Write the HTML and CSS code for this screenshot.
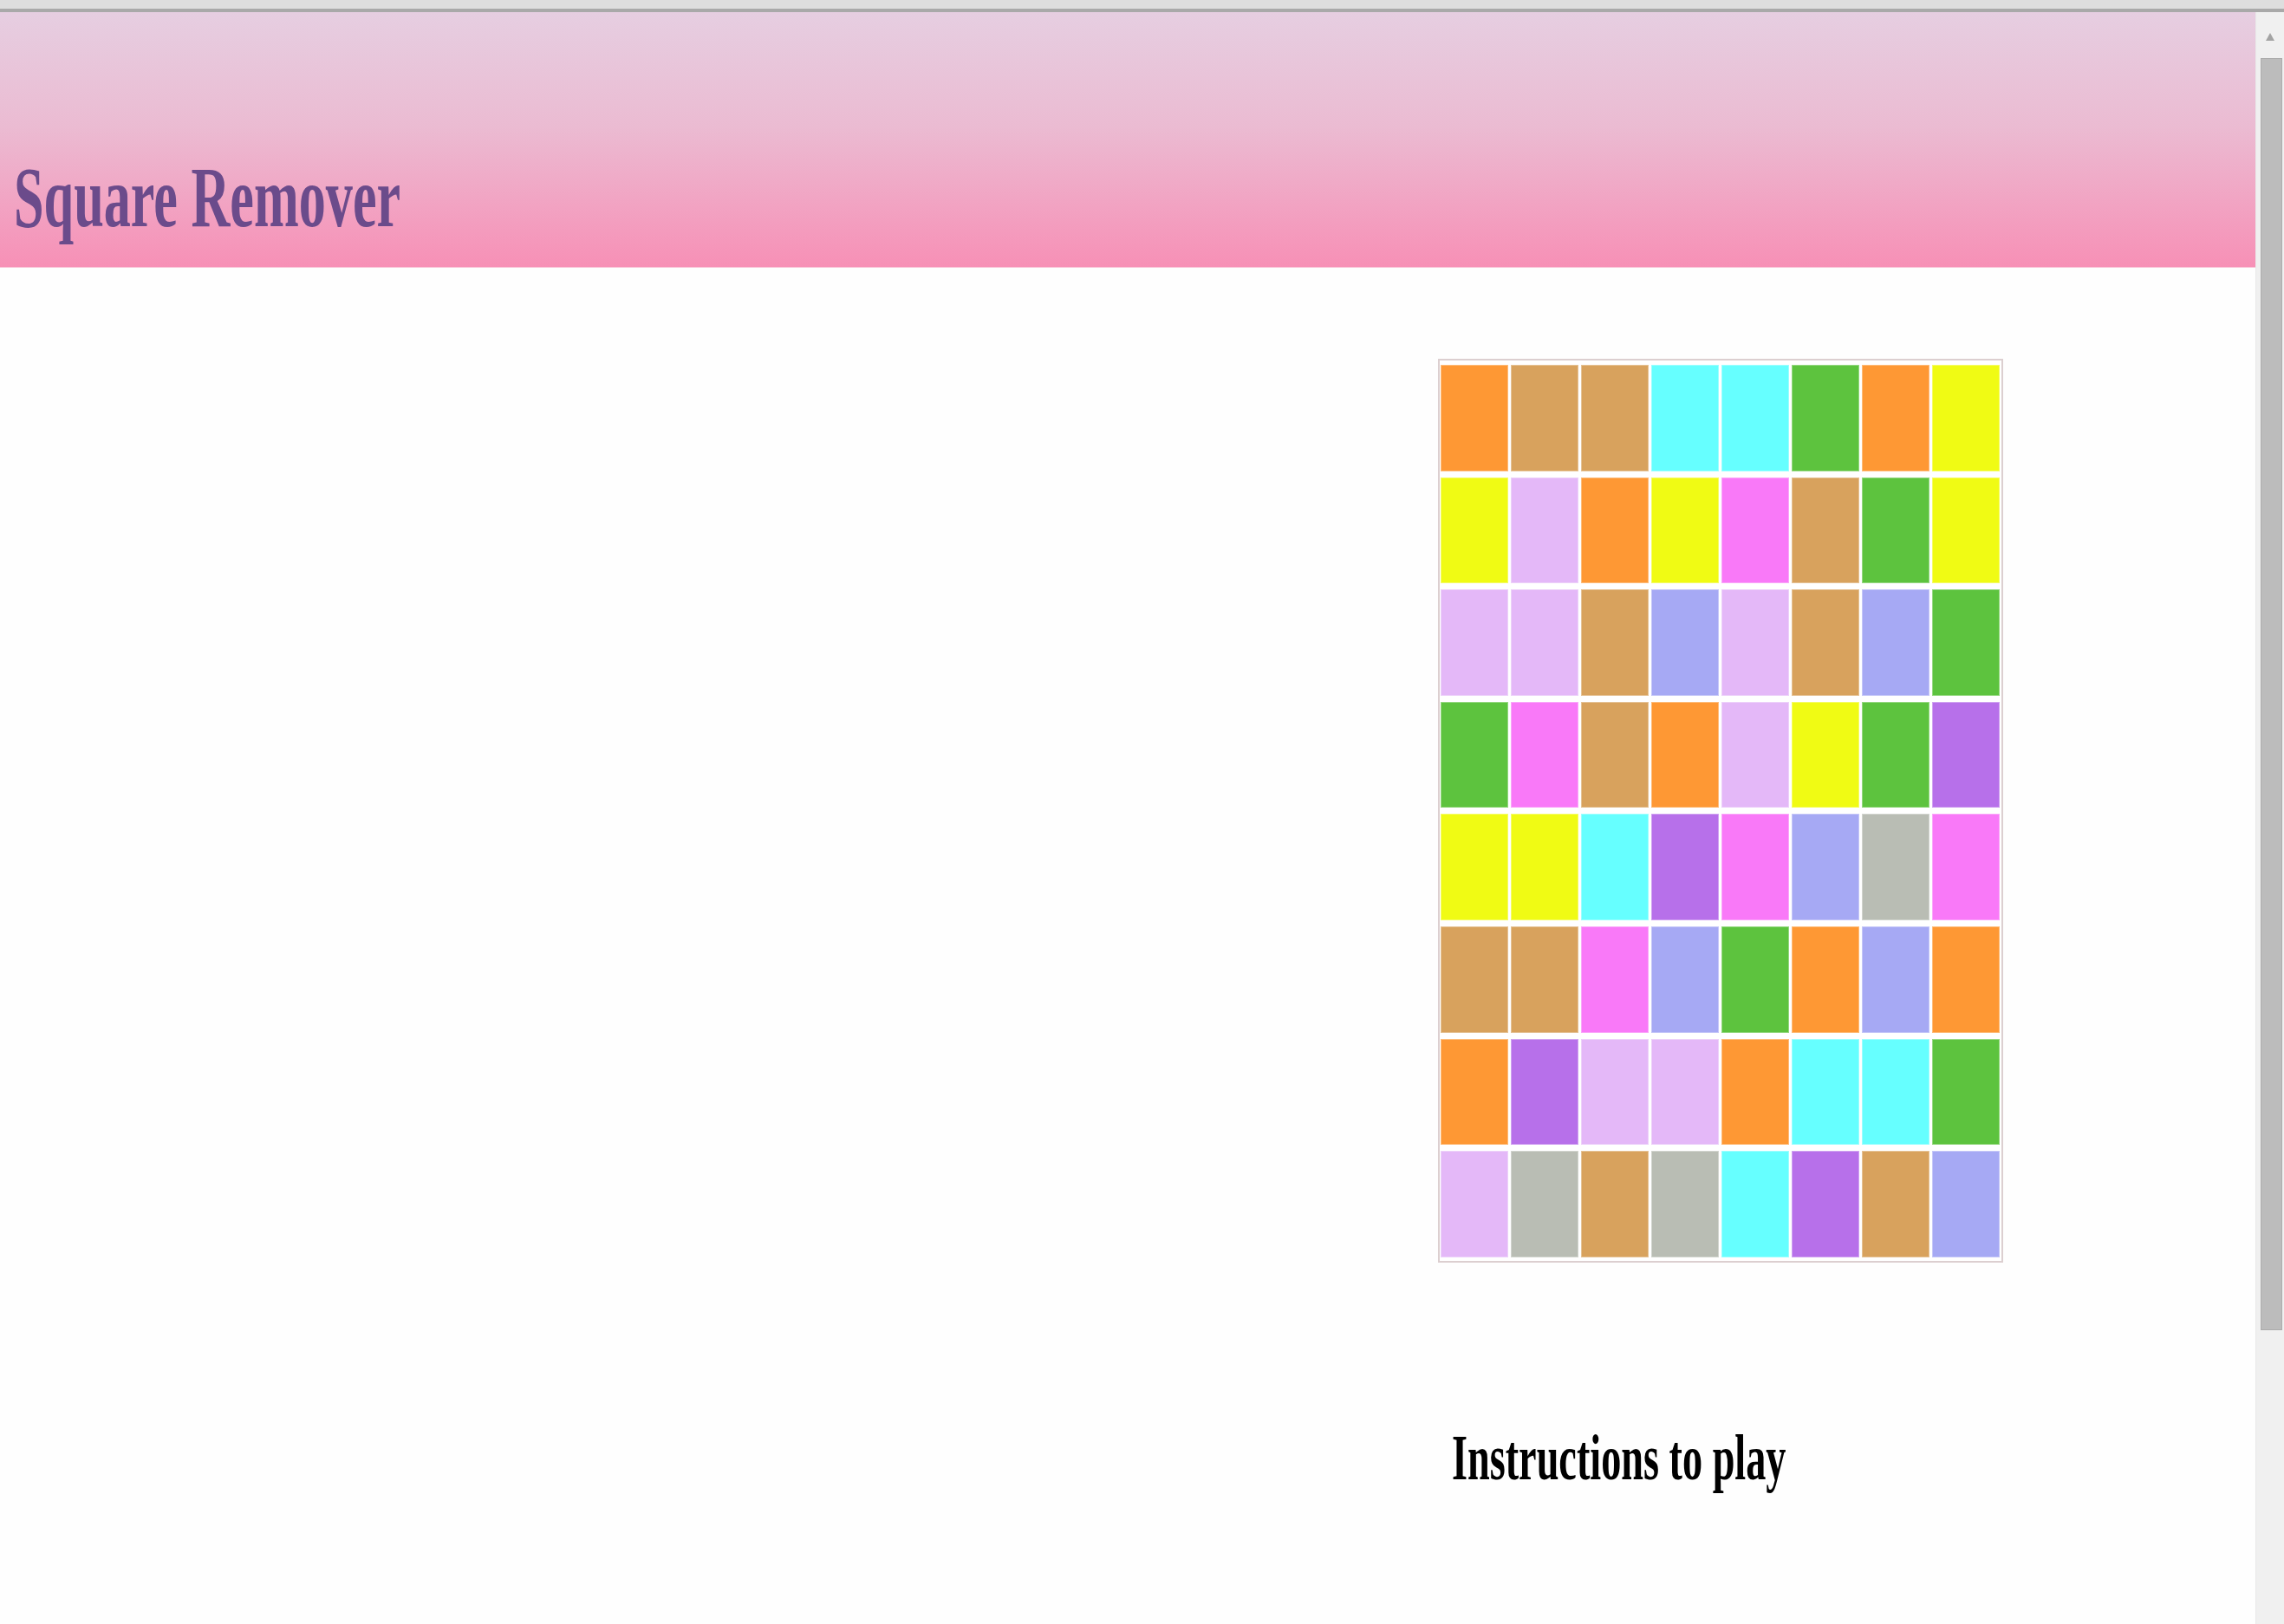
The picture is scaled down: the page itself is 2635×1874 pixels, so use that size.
FILE: index.html
```html
<!DOCTYPE html>
<html lang="en">
<head>
<meta charset="utf-8">
<title>Square Remover</title>
<link rel="stylesheet" href="styles.css">
</head>
<body>
<div class="chrome"></div>
<div class="viewport">
  <div class="page">
    <header class="header">
      <h1 class="title"><span class="squeeze title-text">Square Remover</span></h1>
    </header>
    <main class="main">
      <div class="spacer"></div>
      <section class="game">
        <div class="board">
          <div class="cell orange"></div><div class="cell tan"></div><div class="cell tan"></div><div class="cell cyan"></div><div class="cell cyan"></div><div class="cell green"></div><div class="cell orange"></div><div class="cell yellow"></div>
          <div class="cell yellow"></div><div class="cell lilac"></div><div class="cell orange"></div><div class="cell yellow"></div><div class="cell pink"></div><div class="cell tan"></div><div class="cell green"></div><div class="cell yellow"></div>
          <div class="cell lilac"></div><div class="cell lilac"></div><div class="cell tan"></div><div class="cell peri"></div><div class="cell lilac"></div><div class="cell tan"></div><div class="cell peri"></div><div class="cell green"></div>
          <div class="cell green"></div><div class="cell pink"></div><div class="cell tan"></div><div class="cell orange"></div><div class="cell lilac"></div><div class="cell yellow"></div><div class="cell green"></div><div class="cell purple"></div>
          <div class="cell yellow"></div><div class="cell yellow"></div><div class="cell cyan"></div><div class="cell purple"></div><div class="cell pink"></div><div class="cell peri"></div><div class="cell gray"></div><div class="cell pink"></div>
          <div class="cell tan"></div><div class="cell tan"></div><div class="cell pink"></div><div class="cell peri"></div><div class="cell green"></div><div class="cell orange"></div><div class="cell peri"></div><div class="cell orange"></div>
          <div class="cell orange"></div><div class="cell purple"></div><div class="cell lilac"></div><div class="cell lilac"></div><div class="cell orange"></div><div class="cell cyan"></div><div class="cell cyan"></div><div class="cell green"></div>
          <div class="cell lilac"></div><div class="cell gray"></div><div class="cell tan"></div><div class="cell gray"></div><div class="cell cyan"></div><div class="cell purple"></div><div class="cell tan"></div><div class="cell peri"></div>
        </div>
        <h2 class="instructions"><span class="squeeze instr-text">Instructions to play</span></h2>
      </section>
    </main>
  </div>
  <div class="scrollbar">
    <div class="arrow-up"></div>
    <div class="thumb"></div>
  </div>
</div>
</body>
</html>
```
FILE: styles.css
```css
html, body {
  margin: 0;
  padding: 0;
  background: #ffffff;
  overflow: hidden;
}

body {
  font-family: "Liberation Serif", "Times New Roman", serif;
  width: 2635px;
  height: 1874px;
}

.chrome {
  height: 10px;
  background: #dedede;
  border-bottom: 4px solid #a9a9a9;
}

.viewport {
  display: flex;
  height: 1860px;
}

.page {
  flex: 1;
  display: flex;
  flex-direction: column;
  background: #fefefe;
}

.header {
  box-sizing: border-box;
  height: 295px;
  padding: 164px 0 0 16px;
  background: linear-gradient(to bottom, #e6cee1 0%, #ebbbd2 45%, #f790b6 100%);
  border-bottom: 1px solid #f8c4d6;
}

.title {
  margin: 0;
  font-size: 99px;
  line-height: 99px;
  font-weight: bold;
  color: #6b4b8b;
  white-space: nowrap;
}

.squeeze {
  display: inline-block;
  transform-origin: left center;
}

.title-text {
  transform: scaleX(0.628);
}

.main {
  display: grid;
  grid-template-columns: 1659px auto;
}

.game {
  padding-top: 105px;
}

.board {
  box-sizing: border-box;
  width: 652px;
  display: grid;
  grid-template-columns: repeat(8, 78px);
  grid-template-rows: repeat(8, 122.6px);
  column-gap: 3px;
  row-gap: 7px;
  padding: 5px 2px 4px 1px;
  border: 2px solid #dccfd0;
  background: #ffffff;
}

.cell {
  box-shadow: inset 0 0 0 1px rgba(255, 255, 255, 0.35);
}

.orange { background: #fe9834; }
.tan { background: #d8a25d; }
.cyan { background: #66ffff; }
.green { background: #5dc33e; }
.yellow { background: #f0fb14; }
.lilac { background: #e4b8f8; }
.pink { background: #f979f8; }
.peri { background: #a6a9f4; }
.purple { background: #b770ea; }
.gray { background: #b9bdb4; }

.instructions {
  margin: 188px 0 0 0;
  padding-left: 16px;
  font-size: 74px;
  line-height: 74px;
  font-weight: bold;
  color: #000000;
  white-space: nowrap;
}

.instr-text {
  transform: scaleX(0.625);
}

.scrollbar {
  width: 33px;
  background: #f0f0f0;
  border-left: 1px solid #e9e9e9;
  box-sizing: border-box;
  display: flex;
  flex-direction: column;
  align-items: center;
}

.arrow-up {
  margin-top: 24px;
  width: 0;
  height: 0;
  border-left: 5px solid transparent;
  border-right: 5px solid transparent;
  border-bottom: 9px solid #a3a3a3;
}

.thumb {
  margin-top: 20px;
  width: 25px;
  height: 1468px;
  box-sizing: border-box;
  background: #bcbcbc;
  border: 1px solid #acacac;
  margin-left: 3px;
}
```
